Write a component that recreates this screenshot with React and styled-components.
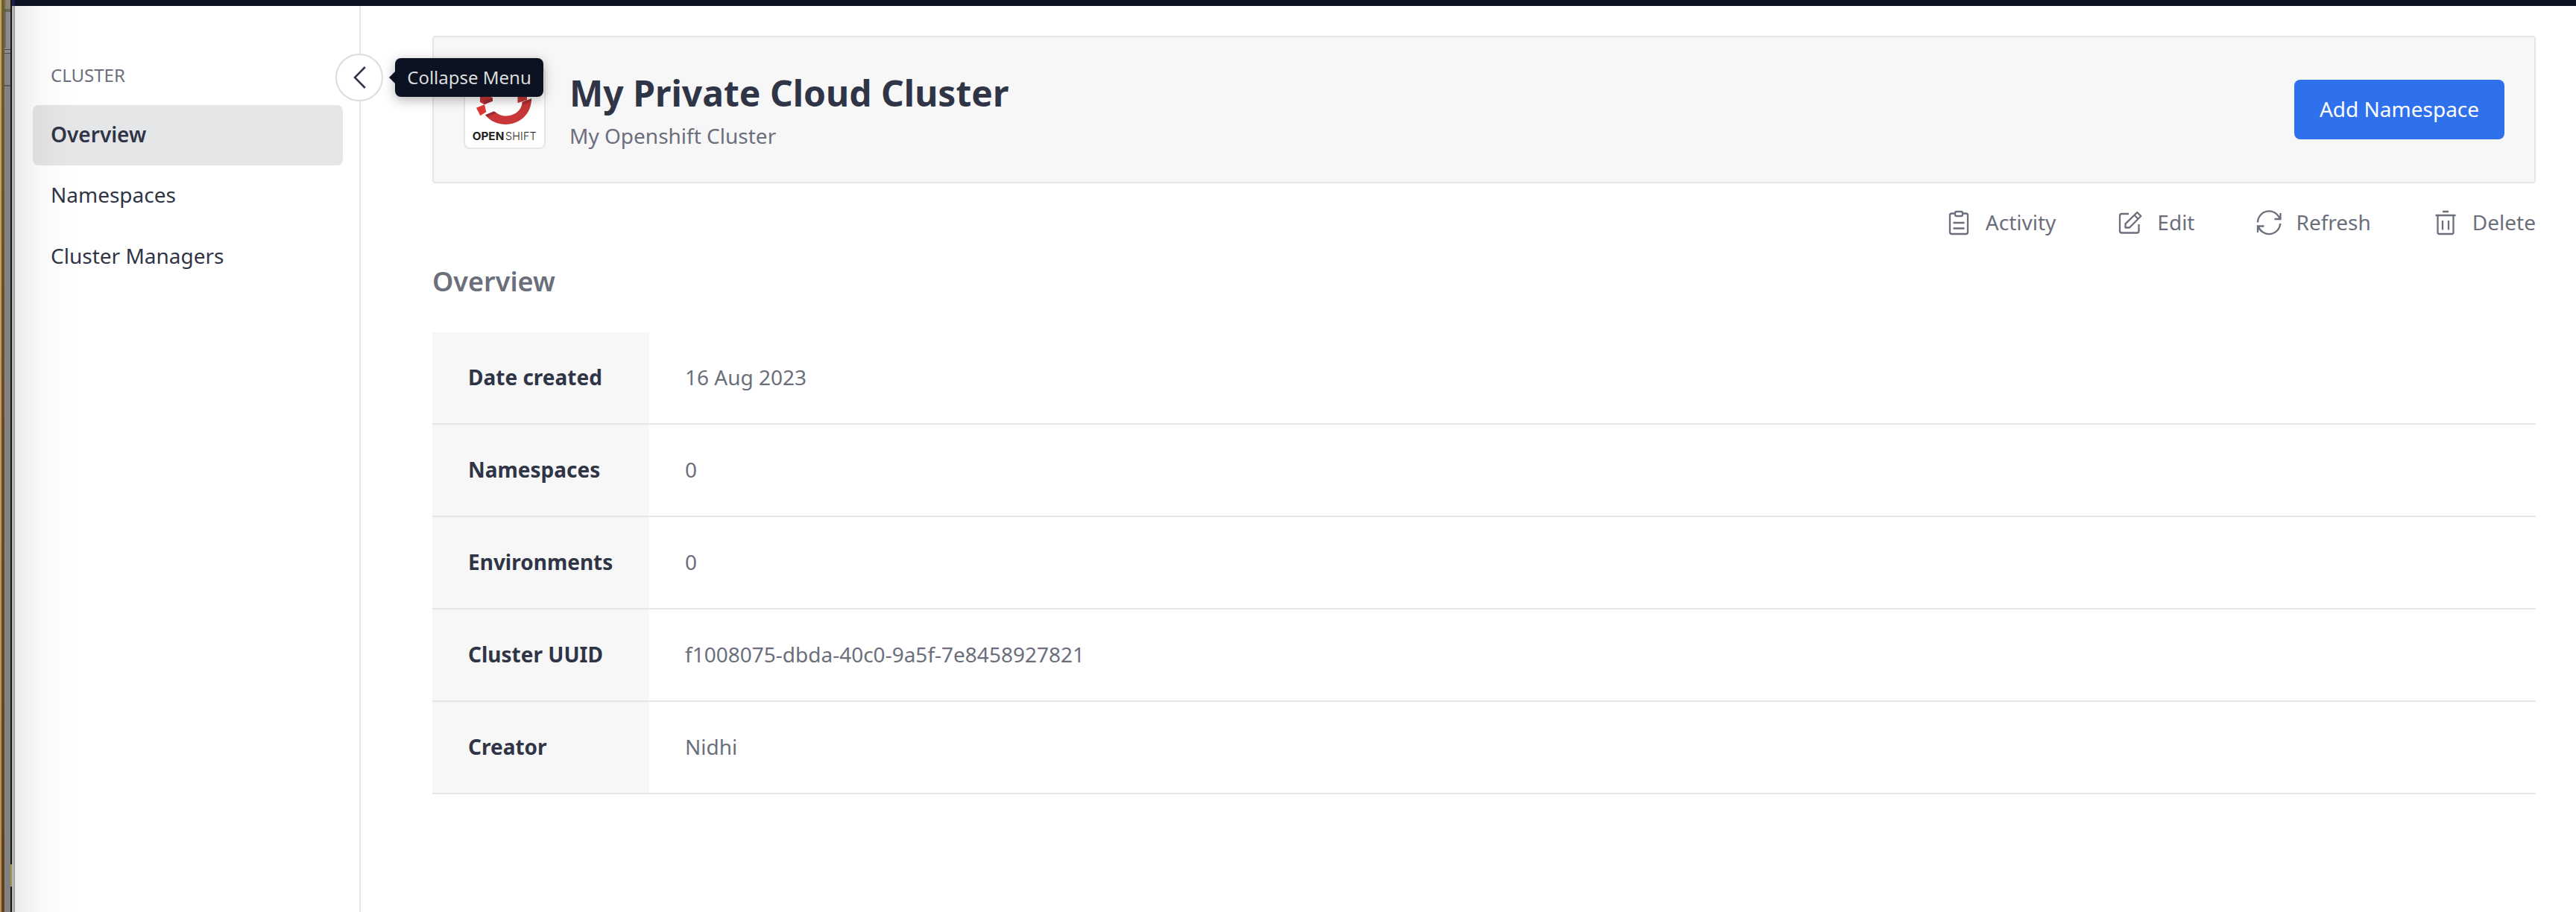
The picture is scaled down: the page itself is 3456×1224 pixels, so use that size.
import React from "react";
import styled, { createGlobalStyle } from "styled-components";

const GlobalStyle = createGlobalStyle`
  * { box-sizing: border-box; }
  html, body { margin: 0; padding: 0; background: #fff; }
  body { font-family: "Noto Sans", "Open Sans", sans-serif; overflow: hidden; }
`;

const Screen = styled.div`
  display: flex;
  width: 3456px;
  height: 1224px;
  overflow: hidden;
`;

const Desktop = styled.div`
  display: flex;
  flex: none;
  width: 16px;
`;

const Sliver = styled.div`
  flex: none;
  width: ${(p) => p.$w}px;
  background: ${(p) => p.$bg};
`;

const Browser = styled.div`
  display: flex;
  flex-direction: column;
  flex: 1;
  min-width: 0;
`;

const TopBar = styled.div`
  flex: none;
  height: 8px;
  background: linear-gradient(90deg, #241f52 0 2px, #1b1b40 2px 4px, #0c1221 4px);
`;

const Body = styled.div`
  display: flex;
  flex: 1;
`;

const Sidebar = styled.aside`
  position: relative;
  flex: none;
  width: 468px;
  padding: 75px 22px 0 28px;
  border-right: 2px solid #e6e6e6;
  background: linear-gradient(
    90deg,
    #b7b4b9 0 2px,
    #aeacb0 2px 3px,
    #999699 3px 4px,
    #ebebeb 4px,
    #f1f1f1 20px,
    #f9f9f9 40px,
    #fdfdfd 64px,
    #ffffff 84px
  );
`;

const GroupLabel = styled.div`
  padding-left: 24px;
  margin-bottom: 22px;
  font-size: 24px;
  line-height: 36px;
  color: #6b6f7c;
`;

const NavItem = styled.a`
  display: block;
  height: 81.4px;
  padding: 18px 24px 0;
  border-radius: 8px;
  font-size: 28px;
  line-height: 42px;
  font-weight: ${(p) => (p.$active ? 600 : 400)};
  color: #2f3546;
  background: ${(p) => (p.$active ? "rgba(12, 18, 33, 0.105)" : "transparent")};
`;

const Toggle = styled.button`
  position: absolute;
  z-index: 2;
  top: 64px;
  right: -32px;
  display: flex;
  align-items: center;
  justify-content: center;
  width: 64px;
  height: 64px;
  padding: 0;
  border: 2px solid #dcdcdc;
  border-radius: 50%;
  background: #fff;
  font-family: inherit;
`;

const Tooltip = styled.span`
  position: absolute;
  left: 78px;
  top: 4px;
  width: 199px;
  height: 52px;
  border-radius: 8px;
  background: #0c1221;
  color: #dadbdd;
  font-size: 24px;
  line-height: 51px;
  text-align: center;
  white-space: nowrap;
  box-shadow: 0 4px 16px rgba(0, 0, 0, 0.3);

  &::before {
    content: "";
    position: absolute;
    left: -8px;
    top: 18px;
    border: 8px solid transparent;
    border-left: 0;
    border-right-color: #0c1221;
  }
`;

const Main = styled.main`
  flex: 1;
  min-width: 0;
  padding: 40px 54px 0 96px;
`;

const Header = styled.header`
  display: flex;
  align-items: flex-start;
  height: 198px;
  padding: 40px 40px 0;
  border: 2px solid #e6e6e6;
  border-radius: 4px;
  background: #f7f7f7;
`;

const LogoBox = styled.div`
  flex: none;
  width: 110px;
  height: 110px;
  border: 2px solid #e6e6e6;
  border-radius: 8px;
  background: #fff;

  svg { display: block; }
`;

const Titles = styled.div`
  flex: 1;
  padding-left: 32px;
`;

const Title = styled.h1`
  margin: 3px 0 0;
  font-size: 48px;
  line-height: 64px;
  font-weight: 700;
  color: #2f3546;
`;

const Subtitle = styled.p`
  margin: 4px 0 0;
  font-size: 28px;
  line-height: 42px;
  color: #6b6f7c;
`;

const PrimaryButton = styled.button`
  width: 282px;
  height: 80px;
  margin-top: 17px;
  padding: 0 0 2px;
  border: 0;
  border-radius: 8px;
  background: #2f70ed;
  color: #fff;
  font-family: inherit;
  font-size: 28px;
  white-space: nowrap;
`;

const Toolbar = styled.div`
  display: flex;
  justify-content: flex-end;
  gap: 84px;
  padding-top: 30px;
`;

const Action = styled.button`
  display: flex;
  align-items: center;
  gap: 20px;
  height: 44px;
  padding: 0;
  border: 0;
  background: none;
  color: #6b6f7c;
  font-family: inherit;
  font-size: 28px;
  line-height: 42px;

  svg { display: block; margin-top: 2px; }
`;

const SectionTitle = styled.h2`
  margin: 31px 0 0;
  font-size: 36px;
  line-height: 54px;
  font-weight: 600;
  color: #6b6f7c;
`;

const Details = styled.dl`
  margin: 41px 0 0;
`;

const DetailRow = styled.div`
  display: grid;
  grid-template-columns: 291px 1fr;
  height: 124px;
  border-bottom: 2px solid #e6e6e6;
  font-size: 28px;
  line-height: 42px;
`;

const Term = styled.dt`
  padding: 39px 0 0 48px;
  background: #f7f7f7;
  font-weight: 700;
  color: #2f3546;
`;

const Value = styled.dd`
  margin: 0;
  padding: 39px 0 0 48px;
  color: #6b6f7c;
`;

const stroke = { fill: "none", stroke: "currentColor", strokeWidth: 2.3 };

const ClipboardIcon = () => (
  <svg width="32" height="34" viewBox="0 0 32 34" {...stroke}>
    <path d="M10 4.500H6.500Q4 4.500 4 7V29.500Q4 32 6.500 32H25.500Q28 32 28 29.500V7Q28 4.500 25.500 4.500H22" />
    <rect x="11" y="2" width="10" height="6" rx="2" />
    <path d="M8.500 17H23.500M8.500 24.500H23.500" />
  </svg>
);

const EditIcon = () => (
  <svg width="32" height="34" viewBox="0 0 32 34" {...stroke}>
    <path d="M14 5H4.500Q2 5 2 7.500V28Q2 30.500 4.500 30.500H25Q27.500 30.500 27.500 28V19" />
    <path d="M25.300 3L30.300 8L15 23.500H9.500V18.300Z" strokeLinejoin="round" />
    <path d="M21.500 6.800L26.500 11.800" />
  </svg>
);

const RefreshIcon = () => (
  <svg width="32" height="34" viewBox="0 0 32 34" overflow="visible" {...stroke}>
    <path d="M1 16.500A15.200 15.200 0 0 1 30.500 11.500M31.500 4V12H23.500" />
    <path d="M31.300 18A15.200 15.200 0 0 1 2 22.500M1 30V21.500H9.500" />
  </svg>
);

const TrashIcon = () => (
  <svg width="32" height="34" viewBox="0 0 32 34" {...stroke}>
    <path d="M2.500 7H29.500M12 2H20M5.500 7V30Q5.500 32 7.500 32H24.500Q26.500 32 26.500 30V7" />
    <path d="M12 14V26.500M20 14V26.500" />
  </svg>
);

const OpenShiftLogo = () => (
  <svg width="106" height="106" viewBox="552 276 318 318">
    <path d="M612 411V390C615 338 660 290 710 290C750 290 785 312 801 350V402L764 414V378C757 345 735 325 708 325C675 325 652 352 650 388L663 394V406L628 420Z" fill="#c83637" />
    <path d="M625 404L663 394V407L630 421Z" fill="#a12c33" />
    <path d="M597 434L630 421L637 451L613 466Z" fill="#db3a33" />
    <path d="M819 397C820 458 772 501 716 501C681 501 651 487 633 463L672 450C686 461 700 467 714 467C750 467 781 444 782 411Z" fill="#c83637" />
    <path d="M633 463L668 448L677 455L641 470Z" fill="#9b2b32" />
    <path d="M782 411L819 397L818 408L782 424Z" fill="#a82e34" />
    <path d="M764 388L800 376L801 402L764 414Z" fill="#c83637" />
    <text x="581" y="563" textLength="128" lengthAdjust="spacingAndGlyphs" fontFamily="Inter, sans-serif" fontSize="43" fontWeight="700" fill="#231f20">OPEN</text>
    <text x="714" y="563" textLength="125" fontFamily="Inter, sans-serif" fontSize="43" fontWeight="300" fill="#231f20">SHIFT</text>
  </svg>
);

const navItems = ["Overview", "Namespaces", "Cluster Managers"];

const actions = [
  ["Activity", ClipboardIcon],
  ["Edit", EditIcon],
  ["Refresh", RefreshIcon],
  ["Delete", TrashIcon],
];

const details = [
  ["Date created", "16 Aug 2023"],
  ["Namespaces", "0"],
  ["Environments", "0"],
  ["Cluster UUID", "f1008075-dbda-40c0-9a5f-7e8458927821"],
  ["Creator", "Nidhi"],
];

export default function App() {
  return (
    <>
      <GlobalStyle />
      <Screen>
        <Desktop>
          <Sliver $w={2} $bg="linear-gradient(#bda668, #c39d68 400px, #b88d59)" />
          <Sliver $w={4} $bg="linear-gradient(#6f5d2b, #6b4f22 400px, #5f431c)" />
          <Sliver $w={2} $bg="linear-gradient(#7d7660 0 12px, #5d5b52 12px 16px, #6c6c6c 16px 64px, #858585 64px 66px, #4b4b4b 66px 67px, #8b8b8b 67px 71px, #4b4b4b 71px 72px, #858585 72px 114px, #5b5b5b 114px 116px, #858585 116px)" />
          <Sliver $w={6} $bg="linear-gradient(#8d8774 0 12px, #6b6759 12px 16px, #8b8b8b 16px 66px, #4b4b4b 66px 67px, #8b8b8b 67px 71px, #4b4b4b 71px 72px, #858585 72px 114px, #5b5b5b 114px 116px, #808080 116px)" />
          <Sliver $w={2} $bg="linear-gradient(#151515 0 1160px, #9a9650 1160px 1190px, #151515 1190px)" />
        </Desktop>
        <Browser>
          <TopBar />
          <Body>
            <Sidebar>
              <GroupLabel>CLUSTER</GroupLabel>
              <nav>
                {navItems.map((label, i) => (
                  <NavItem key={label} $active={i === 0}>{label}</NavItem>
                ))}
              </nav>
              <Toggle aria-label="Collapse Menu">
                <svg width="20" height="32" viewBox="0 0 20 32" fill="none" stroke="#2f3546" strokeWidth="2.5">
                  <path d="M17.800 2L4 16L17.800 30" />
                </svg>
                <Tooltip>Collapse Menu</Tooltip>
              </Toggle>
            </Sidebar>
            <Main>
              <Header>
                <LogoBox><OpenShiftLogo /></LogoBox>
                <Titles>
                  <Title>My Private Cloud Cluster</Title>
                  <Subtitle>My Openshift Cluster</Subtitle>
                </Titles>
                <PrimaryButton>Add Namespace</PrimaryButton>
              </Header>
              <Toolbar>
                {actions.map(([label, Icon]) => (
                  <Action key={label}><Icon />{label}</Action>
                ))}
              </Toolbar>
              <SectionTitle>Overview</SectionTitle>
              <Details>
                {details.map(([term, value]) => (
                  <DetailRow key={term}>
                    <Term>{term}</Term>
                    <Value>{value}</Value>
                  </DetailRow>
                ))}
              </Details>
            </Main>
          </Body>
        </Browser>
      </Screen>
    </>
  );
}
